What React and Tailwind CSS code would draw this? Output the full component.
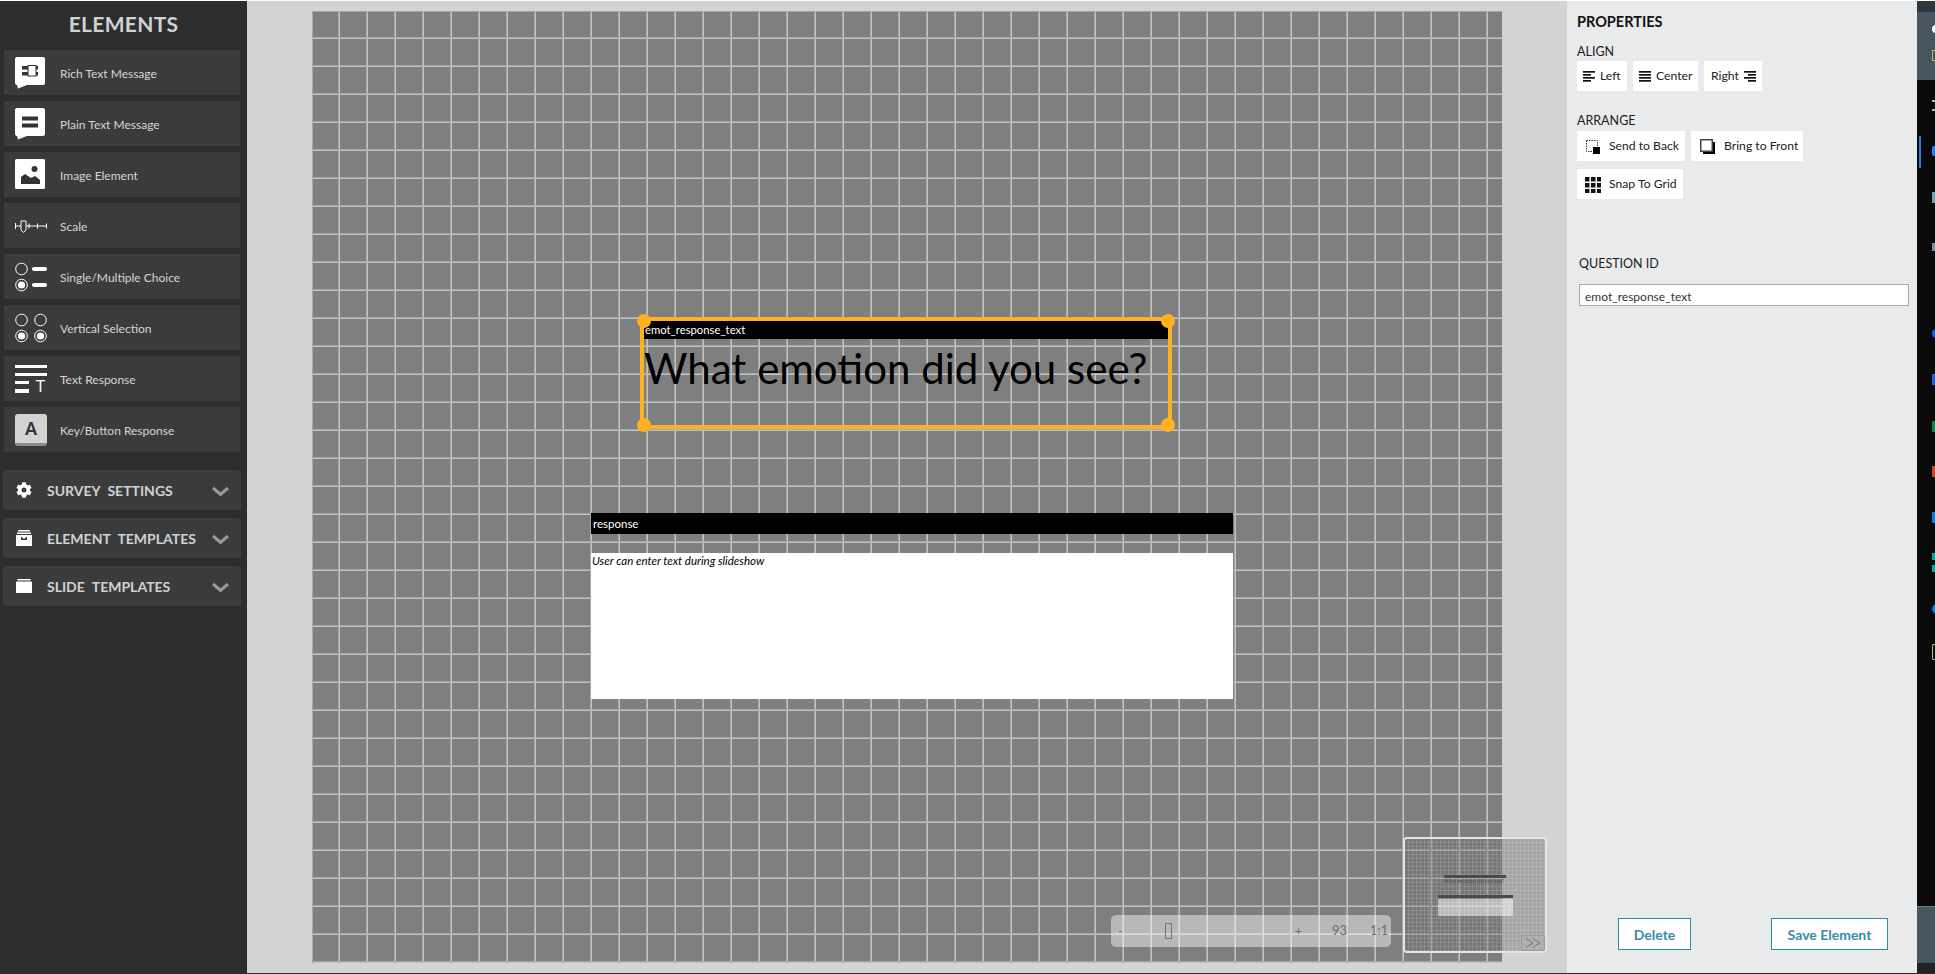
import React from 'react';
import { FaCog } from 'react-icons/fa';

const Bubble = ({ rich }) => (
  <svg width="32" height="32" viewBox="0 0 32 32" className="mt-[1px]">
    <path d="M2 0h26a2 2 0 0 1 2 2v24a2 2 0 0 1-2 2H12l-9 3.500-1-3.500a2 2 0 0 1-2-2V2a2 2 0 0 1 2-2z" fill="#fff" />
    {rich ? (
      <g>
        <rect x="7" y="9" width="16" height="3.500" fill="#333" />
        <rect x="7" y="15" width="16" height="3.500" fill="#333" />
        <rect x="13" y="8.500" width="8" height="10.500" fill="#fff" stroke="#333" strokeWidth="1" />
      </g>
    ) : (
      <g>
        <rect x="7" y="8.500" width="16" height="4" fill="#333" />
        <rect x="7" y="15.500" width="16" height="4" fill="#333" />
      </g>
    )}
  </svg>
);

const ImageIcon = () => (
  <svg width="32" height="32" viewBox="0 0 32 32" className="mt-[1px]">
    <rect x="0" y="0" width="30" height="30" rx="1.500" fill="#fff" />
    <circle cx="19.500" cy="10" r="3" fill="#333" />
    <path d="M6 25v-7l4-3 6 4 4-2 5 4v4z" fill="#333" />
  </svg>
);

const ScaleIcon = () => (
  <svg width="32" height="32" viewBox="0 0 32 32" fill="none" stroke="#fff" strokeWidth="1">
    <path d="M0.500 13v6M0.500 16H32M31.500 13.500v5M14 13.500v5M22.500 13.500v5" />
    <path d="M6 11h5v9l-2.500 2.500L6 20z" fill="#3b3b3b" />
  </svg>
);

const Radio = ({ x, y, on }) => (
  <g>
    <circle cx={x} cy={y} r="5.800" fill="none" stroke="#fff" strokeWidth="1" />
    {on && <circle cx={x} cy={y} r="3.600" fill="#fff" />}
  </g>
);

const ChoiceIcon = () => (
  <svg width="32" height="32" viewBox="0 0 32 32">
    <Radio x={6.500} y={8} />
    <Radio x={6.500} y={24} on />
    <rect x="17" y="6" width="15" height="4" rx="2" fill="#fff" />
    <rect x="17" y="22" width="15" height="4" rx="2" fill="#fff" />
  </svg>
);

const VerticalIcon = () => (
  <svg width="32" height="32" viewBox="0 0 32 32">
    <Radio x={6.500} y={8} />
    <Radio x={25.500} y={8} />
    <Radio x={6.500} y={24} on />
    <Radio x={25.500} y={24} on />
  </svg>
);

const TextIcon = () => (
  <div className="relative w-8 h-7 flex flex-col gap-[5px]">
    <div className="h-[4px] w-8 bg-white" />
    <div className="h-[4px] w-8 bg-white" />
    <div className="h-[4px] w-[14px] bg-white" />
    <div className="h-[4px] w-[14px] bg-white" />
    <span className="absolute right-[2px] bottom-[-3px] text-white text-[17px] leading-[20px] font-['Open_Sans',sans-serif]">T</span>
  </div>
);

const KeyIcon = () => (
  <div className="mt-[1px] w-8 h-8 rounded-[3px] bg-[#d3d3d3] border-b-[3px] border-[#8c8c8c] flex items-center justify-center text-[#333] text-[18px] font-semibold font-['Noto_Sans',sans-serif]">A</div>
);

const ELEMENTS = [
  ['Rich Text Message', <Bubble rich />],
  ['Plain Text Message', <Bubble />],
  ['Image Element', <ImageIcon />],
  ['Scale', <ScaleIcon />],
  ['Single/Multiple Choice', <ChoiceIcon />],
  ['Vertical Selection', <VerticalIcon />],
  ['Text Response', <TextIcon />],
  ['Key/Button Response', <KeyIcon />],
];

const ArchiveIcon = () => (
  <svg width="16" height="16" viewBox="0 0 16 16" fill="#fff">
    <rect x="2" y="0" width="12" height="1.500" />
    <rect x="1" y="2.500" width="14" height="1.500" />
    <path d="M0 5h16v11H0zM5 7v3h6V7h-1.500v1.500h-3V7z" fillRule="evenodd" />
  </svg>
);

const SlideIcon = () => (
  <svg width="16" height="14" viewBox="0 0 16 14" fill="#fff">
    <rect x="1.500" y="0" width="13" height="1.500" />
    <rect x="0" y="2.500" width="16" height="11.500" rx="0.500" />
  </svg>
);

const ACCORDIONS = [
  ['SURVEY SETTINGS', <FaCog className="w-4 h-4 text-white" />],
  ['ELEMENT TEMPLATES', <ArchiveIcon />],
  ['SLIDE TEMPLATES', <SlideIcon />],
];

const Chevron = () => (
  <svg width="17" height="11" viewBox="0 0 17 11" fill="none" stroke="#9a9a9a" strokeWidth="3">
    <path d="M1 2l7.500 6.500L16 2" />
  </svg>
);

function Sidebar() {
  return (
    <aside className="w-[247px] shrink-0 bg-[#2d2d2d] flex flex-col">
      <h1 className="h-[49px] pb-[3px] flex items-center justify-center text-[#d0d3d6] text-[21px] font-bold tracking-[0.3px]">ELEMENTS</h1>
      <div className="flex flex-col gap-[6px] pl-[4px]">
        {ELEMENTS.map(([label, icon]) => (
          <div key={label} className="w-[236px] h-[45px] bg-[#3b3b3b] flex items-center pl-[11px]">
            <div className="w-[32px] h-[32px] flex items-center justify-start">{icon}</div>
            <span className="ml-[13px] pt-[2px] text-[12px] text-[#d4d6d8]">{label}</span>
          </div>
        ))}
      </div>
      <div className="flex flex-col gap-[8px] pl-[3px] mt-[18px]">
        {ACCORDIONS.map(([label, icon]) => (
          <div key={label} className="w-[238px] h-[40px] bg-[#3b3b3b] rounded-[4px] flex items-center pl-[13px] pr-[12px]">
            <div className="w-[16px] flex justify-center">{icon}</div>
            <span className="ml-[15px] flex-1 text-[14px] font-bold text-[#ced2d6] [word-spacing:4px]">{label}</span>
            <div className="mt-[3px]"><Chevron /></div>
          </div>
        ))}
      </div>
    </aside>
  );
}

function Canvas() {
  return (
    <main className="relative flex-1 bg-[#d2d3d5] pl-[65px] pt-[10px]">
      <div className="relative w-[1190px] h-[952px] bg-[#7f7f7f] bg-[linear-gradient(to_right,transparent_26px,#a6a6a6_26px,#a6a6a6_27px,#c2c2c2_27px,#c2c2c2_28px),linear-gradient(to_bottom,transparent_26px,#a6a6a6_26px,#a6a6a6_27px,#c2c2c2_27px,#c2c2c2_28px)] bg-[size:28px_28px] shadow-[inset_1px_1px_0_#a8a8a8]">
        {/* selected element */}
        <div className="absolute left-[328px] top-[306px] w-[532px] h-[112px] border-[4px] border-[#ffb122] box-border">
          <div className="h-[18px] bg-black text-white text-[11.300px] leading-[17px] pl-[1px] overflow-hidden">emot_response_text</div>
          <div className="text-black text-[42px] leading-[56px] mt-[1px] whitespace-nowrap">What emotion did you see?</div>
          <span className="absolute left-[-7px] top-[-7px] w-[14px] h-[14px] rounded-full bg-[#ffb122]" />
          <span className="absolute right-[-7px] top-[-7px] w-[14px] h-[14px] rounded-full bg-[#ffb122]" />
          <span className="absolute left-[-7px] bottom-[-7px] w-[14px] h-[14px] rounded-full bg-[#ffb122]" />
          <span className="absolute right-[-7px] bottom-[-7px] w-[14px] h-[14px] rounded-full bg-[#ffb122]" />
        </div>
        {/* text response element */}
        <div className="absolute left-[279px] top-[502px] w-[642px]">
          <div className="h-[21px] bg-black text-white text-[11.500px] leading-[21px] pl-[2px]">response</div>
          <div className="mt-[19px] h-[146px] bg-white text-black text-[11.500px] italic leading-[16px] pl-[1px]">User can enter text during slideshow</div>
        </div>
      </div>

      {/* zoom slider */}
      <div className="absolute left-[864px] top-[914px] w-[280px] h-[32px] rounded-[5px] bg-white/45 text-[#6e6e6e] text-[12px]">
        <div className="flex items-center h-full pl-[7px]">
          <span className="w-[47px]">-</span>
          <span className="w-[5px] h-[14px] border border-[#777] box-content" />
          <span className="ml-[123px] w-[37px]">+</span>
          <span className="w-[38px] text-[13px]">93</span>
          <span className="text-[13px]">1:1</span>
        </div>
      </div>

      {/* navigator */}
      <div className="absolute left-[1156px] top-[836px] w-[144px] h-[116px] rounded-[4px] border-2 border-[#e3e6e8] bg-[#6e6e6e]/45 bg-[linear-gradient(to_right,transparent_3px,#ffffff1f_3px),linear-gradient(to_bottom,transparent_3px,#ffffff1f_3px)] bg-[size:4px_4px] overflow-hidden box-border">
        <div className="pt-[36px] pl-[39px]">
          <div className="w-[62px] h-[3px] bg-[#4a4a4a]" />
          <div className="text-[5px] leading-[7px] text-[#4f4f4f] whitespace-nowrap">What emotion did you see?</div>
        </div>
        <div className="pt-[10px] pl-[33px]">
          <div className="w-[75px] h-[3px] bg-[#4a4a4a]" />
          <div className="w-[75px] h-[17px] mt-[1px] bg-white/50" />
        </div>
        <div className="absolute right-0 bottom-0 w-[24px] h-[16px] border border-[#999] bg-[#b3b3b3]/60 flex items-center justify-center">
          <svg width="16" height="10" viewBox="0 0 16 10" fill="none" stroke="#777" strokeWidth="1">
            <path d="M0.500 0.500L8 5 0.500 9.500M7.500 0.500L15 5 7.500 9.500" />
          </svg>
        </div>
      </div>
    </main>
  );
}

const Btn = ({ children, w, between }) => (
  <button className={`${w} h-[30px] pt-[1px] bg-white flex items-center whitespace-nowrap ${between} text-[12.200px] text-[#222]`}>{children}</button>
);

const Lines = ({ align }) => {
  const widths = align === 'c' ? [12, 12, 12, 12] : [12, 8, 12, 8];
  return (
    <svg width="12" height="11" viewBox="0 0 12 11" fill="#111">
      {[0, 3, 6, 9].map((y, i) => (
        <rect key={y} x={align === 'r' ? 12 - widths[i] : 0} y={y} width={widths[i]} height="1.700" />
      ))}
    </svg>
  );
};

function Properties() {
  return (
    <section className="w-[350px] shrink-0 bg-[#e9eaec] flex flex-col pl-[10px] text-[#1c1c1c]">
      <h2 className="mt-[12px] h-[18px] leading-[18px] text-[14.500px] font-bold text-[#111]">PROPERTIES</h2>
      <div className="mt-[11px] h-[16px] pt-[1px] leading-[17px] text-[12.500px]">ALIGN</div>
      <div className="mt-[3px] flex gap-[6px]">
        <Btn w="w-[50px]" between="pl-[6px] gap-[5px]"><Lines /> Left</Btn>
        <Btn w="w-[65px]" between="pl-[6px] gap-[5px]"><Lines align="c" /> Center</Btn>
        <Btn w="w-[58px]" between="pl-[7px] gap-[5px]">Right <Lines align="r" /></Btn>
      </div>
      <div className="mt-[21px] h-[16px] leading-[17px] text-[12.500px]">ARRANGE</div>
      <div className="mt-[3px] flex gap-[6px]">
        <Btn w="w-[108px]" between="pl-[9px] gap-[9px]">
          <svg width="14" height="14" viewBox="0 0 14 14">
            <rect x="0.500" y="0.500" width="11" height="11" fill="none" stroke="#333" strokeDasharray="1.500 1" />
            <rect x="7" y="7" width="7" height="7" fill="#000" />
          </svg>
          Send to Back
        </Btn>
        <Btn w="w-[112px]" between="pl-[9px] gap-[9px]">
          <svg width="15" height="15" viewBox="0 0 15 15">
            <rect x="3" y="3" width="12" height="12" fill="#000" />
            <rect x="0.750" y="0.750" width="11.500" height="11.500" fill="#fff" stroke="#444" strokeWidth="1.500" />
          </svg>
          Bring to Front
        </Btn>
      </div>
      <div className="mt-[8px]">
        <Btn w="w-[106px]" between="pl-[8px] gap-[8px]">
          <svg width="16" height="16" viewBox="0 0 16 16" fill="#111">
            {[0, 6, 12].flatMap((x) => [0, 6, 12].map((y) => <rect key={`${x}-${y}`} x={x} y={y} width="4.500" height="4.500" />))}
          </svg>
          Snap To Grid
        </Btn>
      </div>
      <div className="mt-[56px] ml-[2px] h-[18px] leading-[18px] text-[12.500px]">QUESTION ID</div>
      <input
        readOnly
        value="emot_response_text"
        className="mt-[11px] ml-[2px] w-[330px] h-[22px] pt-[2px] bg-white border border-[#aaaaaa] px-[5px] text-[12px] text-[#333] outline-none"
      />
      <div className="mt-auto mb-[23px] flex">
        <button className="ml-[41px] w-[73px] h-[32px] bg-white border border-[#2a8ca6] text-[#3a8ba5] text-[14px] font-bold">Delete</button>
        <button className="ml-[80px] w-[117px] h-[32px] bg-white border border-[#2a8ca6] text-[#3a8ba5] text-[14px] font-bold">Save Element</button>
      </div>
    </section>
  );
}

function RightStrip() {
  return (
    <div className="relative w-[18px] shrink-0 bg-[#0a0a0a] flex flex-col overflow-hidden">
      <div className="h-[11px] bg-[#30363a]" />
      <div className="h-[68px] bg-[#45565e] flex flex-col pl-[15px]">
        <div className="mt-[13px] w-[6px] h-[8px] bg-white rounded-l-full" />
        <div className="mt-[17px] w-[6px] h-[11px] border border-[#d9b04c]" />
      </div>
      <div className="flex flex-col pl-[15px]">
        <div className="mt-[20px] w-[6px] h-[11px] border-y-2 border-[#aab4c0]" />
        <div className="mt-[35px] w-[6px] h-[10px] bg-[#2f7be5] rounded-l-[2px]" />
        <div className="mt-[36px] w-[6px] h-[11px] bg-[#6f9fb0]" />
        <div className="mt-[40px] w-[6px] h-[8px] bg-[#7a8a9a]" />
        <div className="mt-[78px] w-[6px] h-[9px] bg-[#1c62d0] rounded-l-full" />
        <div className="mt-[36px] w-[6px] h-[11px] bg-[#2b5fc7]" />
        <div className="mt-[36px] w-[6px] h-[11px] bg-[#1d7a46]" />
        <div className="mt-[34px] w-[6px] h-[11px] bg-[#c8492a]" />
        <div className="mt-[35px] w-[6px] h-[11px] bg-[#1478d4]" />
        <div className="mt-[30px] w-[6px] h-[7px] bg-[#0aa5a0]" />
        <div className="mt-[5px] w-[6px] h-[7px] bg-[#0aa5a0]" />
        <div className="mt-[32px] w-[6px] h-[10px] bg-[#1a78d8] rounded-l-full" />
        <div className="mt-[30px] w-[6px] h-[16px] border border-r-0 border-[#c9b98f] rounded-l-[2px]" />
      </div>
      <div className="mt-auto h-[57px] bg-[#45565e] border-t border-[#6a7a82]" />
      <div className="h-[10px] bg-[#222]" />
      <div className="absolute left-[2px] top-[135px] w-[2px] h-[32px] bg-[#2f7be5]" />
    </div>
  );
}

export default function App() {
  return (
    <div className="w-[1935px] h-[974px] bg-white pt-px flex flex-col overflow-hidden font-['Lato','Noto_Sans',sans-serif]">
      <div className="flex flex-1 min-h-0">
        <Sidebar />
        <Canvas />
        <Properties />
        <RightStrip />
      </div>
      <div className="h-px bg-[#2d2d2d]" />
    </div>
  );
}
